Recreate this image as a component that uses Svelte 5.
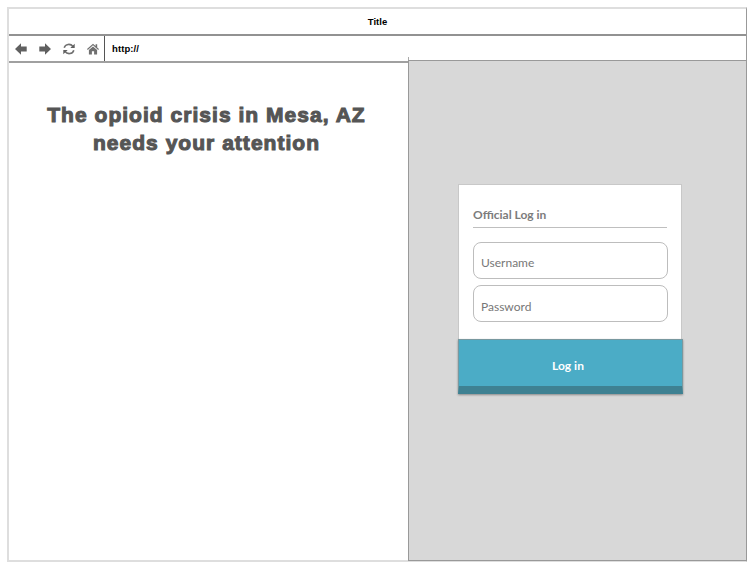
<script>
  const fields = ['Username', 'Password'];
</script>

<div class="page">
  <div class="browser">
    <header class="title"><b>Title</b></header>
    <div class="toolbar">
      <nav>
        <svg viewBox="0 0 12 12"><path d="M0 6 6 .3V3.6h5.7v4.8H6v3.3z" /></svg>
        <svg viewBox="0 0 12 12"><path d="M12 6 6 .3V3.6H.3v4.8H6v3.3z" /></svg>
        <svg viewBox="0 0 12 12"><path class="line" d="M1.2 4.8C2.3.8 7.5.3 10 3.4M10.8 7.2c-1.1 4-6.3 4.5-8.8 1.4" /><path d="M11.7.7v4.4H7.3zM.3 11.3V6.9h4.4z" /></svg>
        <svg class="home" viewBox="0 0 12 12"><path d="M6 .7 0 6l.8.9L6 2.3l5.2 4.6.8-.9-1.8-1.6V1.2H8.6V3zM1.9 7v4.6h3V8.2h2.2v3.4h3V7L6 3.5z" /></svg>
      </nav>
      <div class="address"><b>http://</b></div>
    </div>
    <main>
      <section class="message">
        <h1><span>The opioid crisis in Mesa, AZ</span><span>needs your attention</span></h1>
      </section>
      <section class="side">
        <form class="card">
          <div class="body">
            <h2>Official Log in</h2>
            {#each fields as field}
              <div class="field"><span>{field}</span></div>
            {/each}
          </div>
          <button type="button"><span>Log in</span></button>
        </form>
      </section>
    </main>
  </div>
</div>

<style>
  :global(body) { margin: 0; background: #fff; }
  .page { box-sizing: border-box; width: 754px; height: 570px; padding: 7px 7px 8px; overflow: hidden; font-family: "Liberation Sans", Arial, sans-serif; }
  .browser { box-sizing: border-box; width: 740px; height: 555px; display: flex; flex-direction: column; border: 2px solid #dedede; border-right: 1px solid #999; }
  .title { box-sizing: border-box; height: 27px; border-bottom: 2px solid #929292; text-align: center; font-size: 9.5px; line-height: 25px; }
  .toolbar { height: 26px; display: flex; }
  nav { display: flex; align-items: center; gap: 12px; width: 96px; box-sizing: border-box; padding: 0 0 1px 6px; border-right: 1px solid #555; }
  nav svg { width: 12px; height: 12px; flex: none; fill: #606060; }
  nav svg.home { fill: #707070; }
  .line { fill: none; stroke: #707070; stroke-width: 1.6; }
  .address { padding-left: 7px; font-size: 9.5px; line-height: 25px; }
  .address b { letter-spacing: .1px; }
  main { flex: 1; display: flex; margin-right: -1px; margin-bottom: -1px; margin-top: -2px; }
  .message { width: 399px; box-sizing: border-box; margin-top: 1px; border-top: 2px solid #a0a0a0; padding-top: 38px; }
  h1 { margin: 0; color: #555; font-size: 21px; line-height: 28px; text-align: center; -webkit-text-stroke: 1.05px #555; }
  h1 span { display: block; white-space: nowrap; letter-spacing: 1.03px; padding-right: 4px; }
  .side { position: relative; flex: 1; box-sizing: border-box; border: 1px solid #999; background: #d8d8d8; padding: 123px 0 0 49px; }
  .side::before { content: ""; position: absolute; left: -1px; top: -4px; width: 1px; height: 3px; background: #aaa; }
  .card { width: 225px; }
  .body { width: 224px; height: 155px; box-sizing: border-box; border: 1px solid #c8c8c8; border-bottom: 0; background: #fff; padding: 0 14px; }
  h2 { margin: 0 0 14px; height: 43px; box-sizing: border-box; border-bottom: 1px solid #bfbfbf; padding-top: 22px; font: bold 12px/16px Lato, sans-serif; color: #7c7c7c; }
  .field { box-sizing: border-box; width: 195px; height: 37px; margin-bottom: 6px; border: 1px solid #bdbdbd; border-radius: 8px; padding: 12px 0 0 7px; font: 12px/16px Lato, sans-serif; color: #777; }
  .field + .field { padding-top: 13px; }
  button { display: block; width: 225px; height: 55px; border: 1px solid #78989f; border-bottom: 8px solid #3e8192; border-radius: 0; padding: 5px 5px 0 0; background: #4bacc6; color: #fff; font: bold 12px/16px Lato, sans-serif; box-shadow: 0 1px 2px #888; }
</style>
